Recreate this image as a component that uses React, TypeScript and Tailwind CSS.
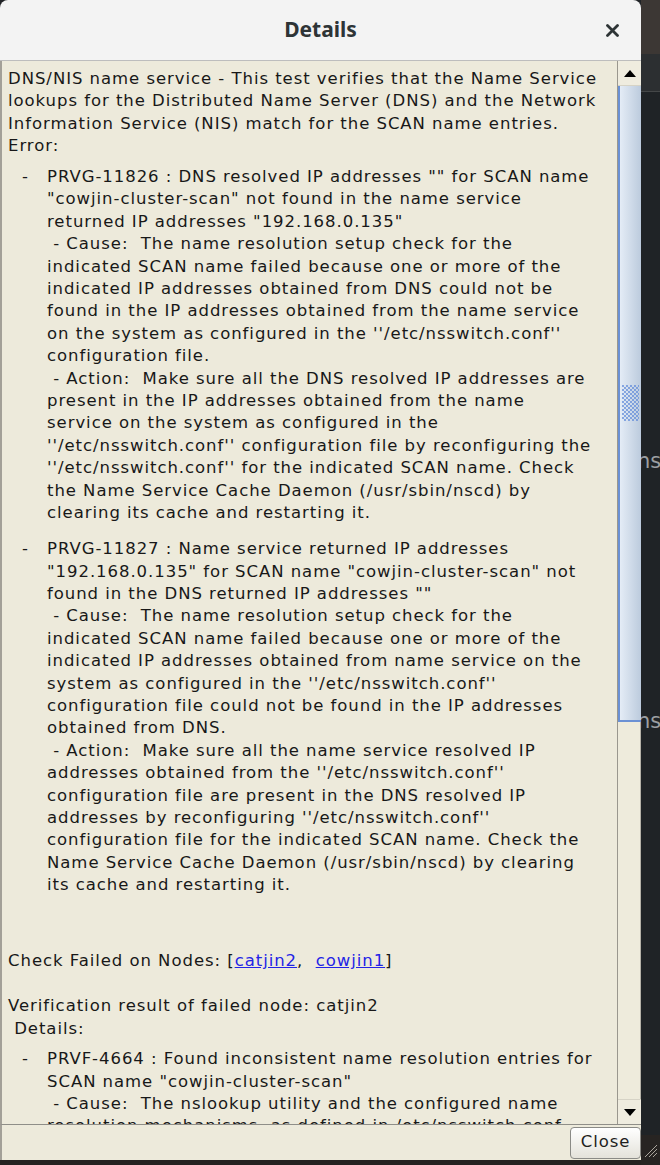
import React from "react"

const body = "font-['DejaVu_Sans',sans-serif] text-[16.5px] leading-[22.4px] tracking-[0.95px] text-[#181818]"

const intro = [
  "DNS/NIS name service - This test verifies that the Name Service",
  "lookups for the Distributed Name Server (DNS) and the Network",
  "Information Service (NIS) match for the SCAN name entries.",
  "Error:",
]

const item1 = [
  "PRVG-11826 : DNS resolved IP addresses \"\" for SCAN name",
  "\"cowjin-cluster-scan\" not found in the name service",
  "returned IP addresses \"192.168.0.135\"",
  " - Cause:  The name resolution setup check for the",
  "indicated SCAN name failed because one or more of the",
  "indicated IP addresses obtained from DNS could not be",
  "found in the IP addresses obtained from the name service",
  "on the system as configured in the ''/etc/nsswitch.conf''",
  "configuration file.",
  " - Action:  Make sure all the DNS resolved IP addresses are",
  "present in the IP addresses obtained from the name",
  "service on the system as configured in the",
  "''/etc/nsswitch.conf'' configuration file by reconfiguring the",
  "''/etc/nsswitch.conf'' for the indicated SCAN name. Check",
  "the Name Service Cache Daemon (/usr/sbin/nscd) by",
  "clearing its cache and restarting it.",
]

const item2 = [
  "PRVG-11827 : Name service returned IP addresses",
  "\"192.168.0.135\" for SCAN name \"cowjin-cluster-scan\" not",
  "found in the DNS returned IP addresses \"\"",
  " - Cause:  The name resolution setup check for the",
  "indicated SCAN name failed because one or more of the",
  "indicated IP addresses obtained from name service on the",
  "system as configured in the ''/etc/nsswitch.conf''",
  "configuration file could not be found in the IP addresses",
  "obtained from DNS.",
  " - Action:  Make sure all the name service resolved IP",
  "addresses obtained from the ''/etc/nsswitch.conf''",
  "configuration file are present in the DNS resolved IP",
  "addresses by reconfiguring ''/etc/nsswitch.conf''",
  "configuration file for the indicated SCAN name. Check the",
  "Name Service Cache Daemon (/usr/sbin/nscd) by clearing",
  "its cache and restarting it.",
]

const item3 = [
  "PRVF-4664 : Found inconsistent name resolution entries for",
  "SCAN name \"cowjin-cluster-scan\"",
  " - Cause:  The nslookup utility and the configured name",
  "resolution mechanisms, as defined in /etc/nsswitch.conf,",
]

function Lines({ lines }: { lines: string[] }) {
  return (
    <div>
      {lines.map((l, i) => (
        <div key={i} className="whitespace-pre">{l}</div>
      ))}
    </div>
  )
}

function Item({ lines, className = "" }: { lines: string[]; className?: string }) {
  return (
    <div className={`flex pl-[14px] ${className}`}>
      <div className="w-[25px] shrink-0 whitespace-pre">-</div>
      <Lines lines={lines} />
    </div>
  )
}

function Arrow({ up }: { up?: boolean }) {
  return (
    <svg width="12" height="7" viewBox="0 0 12 7">
      {up ? <polygon points="6,0 12,7 0,7" fill="#000" /> : <polygon points="0,0 12,0 6,7" fill="#000" />}
    </svg>
  )
}

export default function App() {
  return (
    <div className="w-[660px] h-[1165px] flex bg-[#202326] overflow-hidden">
      {/* Dialog window */}
      <div className="w-[641px] flex flex-col">
        {/* Title bar */}
        <div className="h-[61px] shrink-0 bg-[#f3f3f3] rounded-t-[8px] border-b border-[#bdbdbd] flex items-center justify-center relative">
          <span className="font-['Noto_Sans',sans-serif] font-bold text-[21px] text-[#2e3436]">Details</span>
          <svg className="absolute right-[22px] top-[24px]" width="13" height="13" viewBox="0 0 13 13">
            <path d="M1.5 1.5 L11.5 11.5 M11.5 1.5 L1.5 11.5" stroke="#2e3436" strokeWidth="2.8" strokeLinecap="round" />
          </svg>
        </div>

        {/* Text area with scrollbar */}
        <div className="h-[1064px] shrink-0 flex bg-[#edeadb] border-l-2 border-l-[#a3a098] border-b border-b-[#8f8e88]">
          <div className={`flex-1 overflow-hidden pl-[6px] pt-[7px] ${body}`}>
            <Lines lines={intro} />
            <Item lines={item1} className="mt-[8.4px]" />
            <Item lines={item2} className="mt-[13.6px]" />
            <div className="mt-[53.6px] whitespace-pre">
              Check Failed on Nodes: [<span className="text-[#2323e6] underline">catjin2</span>,  <span className="text-[#2323e6] underline">cowjin1</span>]
            </div>
            <div className="mt-[22.6px] whitespace-pre">Verification result of failed node: catjin2</div>
            <div className="whitespace-pre"> Details:</div>
            <Item lines={item3} className="mt-[8.2px]" />
          </div>

          {/* Scrollbar */}
          <div className="w-[24px] shrink-0 flex flex-col border-l border-[#9a978e]">
            <div className="h-[25px] shrink-0 flex items-center justify-center bg-[#efecdf] border-b border-[#d6d3c6]">
              <Arrow up />
            </div>
            <div className="h-[636px] shrink-0 bg-gradient-to-r from-[#e4ecf6] to-[#bccbdd] border-l-2 border-b-2 border-[#6b91d4] flex items-center justify-center">
              <svg width="17" height="36" viewBox="0 0 17 36">
                <defs>
                  <pattern id="grip" width="4" height="4" patternUnits="userSpaceOnUse">
                    <circle cx="1" cy="1" r="0.9" fill="#5b86d8" />
                    <circle cx="3" cy="3" r="0.9" fill="#5b86d8" />
                  </pattern>
                </defs>
                <rect width="17" height="36" fill="url(#grip)" />
              </svg>
            </div>
            <div className="flex-1 bg-[#eeebdc] border-r border-[#b5b2a8]" />
            <div className="h-[25px] shrink-0 flex items-center justify-center bg-[#efecdf] border-t border-[#d6d3c6]">
              <Arrow />
            </div>
          </div>
        </div>

        {/* Button bar */}
        <div className="h-[35px] shrink-0 bg-[#edeadb] border-l-2 border-l-[#a3a098] flex items-center justify-end">
          <button className="h-[32px] w-[71px] rounded-[4px] border border-[#8a8a86] bg-gradient-to-b from-[#ffffff] to-[#e4e2da] font-['DejaVu_Sans',sans-serif] text-[16.5px] tracking-[0.9px] text-[#1e1e1e]">
            Close
          </button>
        </div>
        <div className="flex-1 bg-[#252220]" />
      </div>

      {/* Background strip beside the window */}
      <div className="w-[19px] flex flex-col overflow-hidden">
        <div className="h-[54px] shrink-0 bg-[#3c3734]" />
        <div className="h-[38px] shrink-0 bg-[#2c2f31] border-b border-[#444748]" />
        <div className="flex-1 bg-[#1f2326] font-['DejaVu_Sans',sans-serif] text-[21px] text-[#9c9fa2] leading-[24px]">
          <div className="mt-[357px] -ml-[4px] whitespace-pre">ns</div>
          <div className="mt-[236px] -ml-[4px] whitespace-pre">ns</div>
        </div>
        <div className="h-[30px] shrink-0 bg-[#272422] flex items-end justify-start">
          <svg width="19" height="19" viewBox="0 0 19 19" className="mb-[5px]">
            <path d="M4 16 L16 4 M8 16 L16 8 M12 16 L16 12" stroke="#a9a59c" strokeWidth="1" />
          </svg>
        </div>
      </div>
    </div>
  )
}
